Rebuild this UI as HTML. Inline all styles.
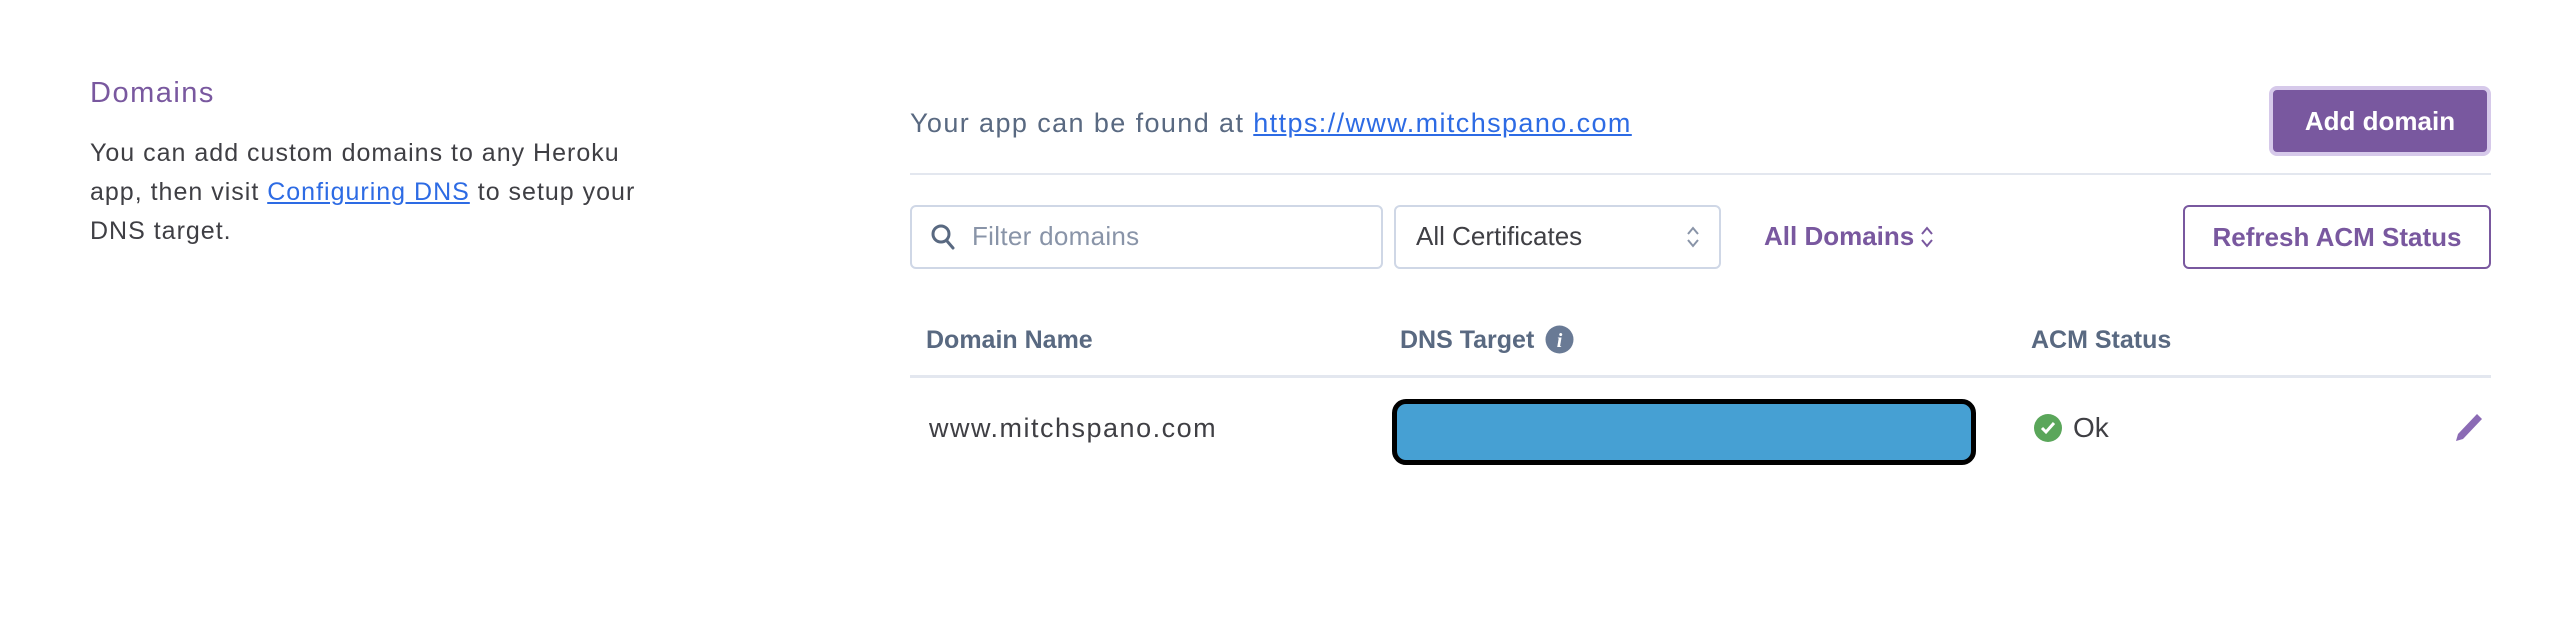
<!DOCTYPE html>
<html><head><meta charset="utf-8"><style>
body{margin:0;width:2556px;height:628px;background:#fff;font-family:"Liberation Sans",sans-serif;position:relative;overflow:hidden;color:#3f3f44}
.a{position:absolute;white-space:nowrap}
a{color:#2d6be4;text-decoration:underline}
</style></head><body>
<div class="a" style="left:90px;top:77px;font-size:29px;color:#79589f;letter-spacing:1.5px">Domains</div>
<div class="a" style="left:90px;top:134px;font-size:25px;line-height:39px;color:#3f3f44;letter-spacing:1px">You can add custom domains to any Heroku<br>app, then visit <a>Configuring DNS</a> to setup your<br>DNS target.</div>

<div class="a" style="left:910px;top:108px;font-size:27px;color:#596981;letter-spacing:1.4px">Your app can be found at <a>https://www.mitchspano.com</a></div>
<div class="a" style="left:2269px;top:86px;width:222px;height:70px;box-sizing:border-box;border:4px solid #d6c9ea;border-radius:8px;background:#79589f;color:#fff;font-size:26px;font-weight:bold;text-align:center;line-height:62px">Add domain</div>
<div class="a" style="left:910px;top:173px;width:1581px;height:2px;background:#e3e7ef"></div>

<div class="a" style="left:910px;top:205px;width:473px;height:64px;box-sizing:border-box;border:2px solid #cfd7e6;border-radius:6px"></div>
<svg class="a" style="left:930px;top:223px" width="26" height="28" viewBox="0 0 26 28"><circle cx="11" cy="11" r="8" fill="none" stroke="#596981" stroke-width="3"/><path d="M17 18l6 7" stroke="#596981" stroke-width="3" stroke-linecap="round"/></svg>
<div class="a" style="left:972px;top:221px;font-size:26px;color:#8994a8;letter-spacing:0.3px">Filter domains</div>

<div class="a" style="left:1394px;top:205px;width:327px;height:64px;box-sizing:border-box;border:2px solid #cfd7e6;border-radius:6px"></div>
<div class="a" style="left:1416px;top:221px;font-size:26px;color:#3f3f44">All Certificates</div>
<svg class="a" style="left:1686px;top:225px" width="14" height="24" viewBox="0 0 14 24"><path d="M2 9l5-6 5 6M2 15l5 6 5-6" fill="none" stroke="#8994a8" stroke-width="2"/></svg>

<div class="a" style="left:1764px;top:221px;font-size:26px;font-weight:bold;color:#79589f">All Domains</div>
<svg class="a" style="left:1920px;top:225px" width="14" height="24" viewBox="0 0 14 24"><path d="M2 9l5-6 5 6M2 15l5 6 5-6" fill="none" stroke="#79589f" stroke-width="2"/></svg>

<div class="a" style="left:2183px;top:205px;width:308px;height:64px;box-sizing:border-box;border:2px solid #79589f;border-radius:6px;color:#79589f;font-size:26px;font-weight:bold;text-align:center;line-height:60px">Refresh ACM Status</div>

<div class="a" style="left:926px;top:326px;font-size:25px;font-weight:bold;color:#596981">Domain Name</div>
<div class="a" style="left:1400px;top:326px;font-size:25px;font-weight:bold;color:#596981">DNS Target</div>
<svg class="a" style="left:1545px;top:325px" width="29" height="29" viewBox="0 0 29 29"><circle cx="14.5" cy="14.5" r="14" fill="#697a95"/><text x="14.5" y="22" font-size="20" font-weight="bold" font-style="italic" fill="#fff" text-anchor="middle" font-family="Liberation Serif,serif">i</text></svg>
<div class="a" style="left:2031px;top:326px;font-size:25px;font-weight:bold;color:#596981">ACM Status</div>
<div class="a" style="left:910px;top:375px;width:1581px;height:3px;background:#e3e7ef"></div>

<div class="a" style="left:929px;top:413px;font-size:27px;color:#3f3f44;letter-spacing:1.5px">www.mitchspano.com</div>
<div class="a" style="left:1392px;top:399px;width:584px;height:66px;box-sizing:border-box;border:5px solid #000;border-radius:14px;background:#46a0d3"></div>
<svg class="a" style="left:2034px;top:414px" width="28" height="28" viewBox="0 0 28 28"><circle cx="14" cy="14" r="14" fill="#5aa65a"/><path d="M8 14l4 4 8-9" fill="none" stroke="#fff" stroke-width="3"/></svg>
<div class="a" style="left:2073px;top:412px;font-size:28px;color:#3f3f44">Ok</div>
<svg class="a" style="left:2452px;top:410px" width="34" height="34" viewBox="0 0 34 34"><path d="M4 31l2-7L25 4l5 5L11 29z" fill="#8b6bb5"/></svg>
</body></html>
